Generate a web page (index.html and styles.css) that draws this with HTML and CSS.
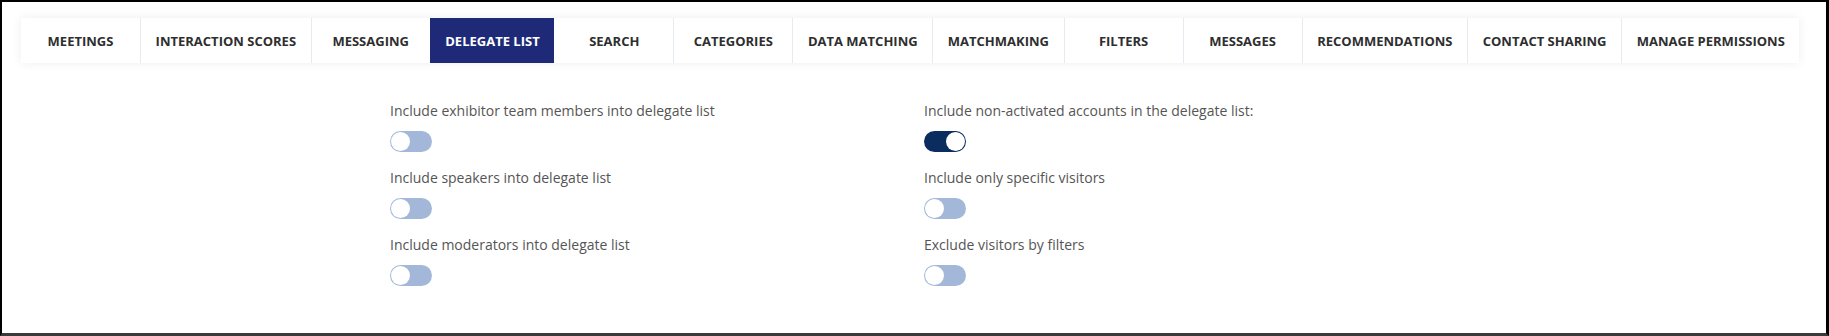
FILE: index.html
```html
<!DOCTYPE html>
<html lang="en">

<head>
    <meta charset="utf-8">
    <link rel="stylesheet" href="styles.css">
</head>

<body>
    <div class="frame">
        <nav class="tabs">
            <a class="tab">Meetings</a>
            <a class="tab">Interaction scores</a>
            <a class="tab">Messaging</a>
            <a class="tab active">Delegate list</a>
            <a class="tab">Search</a>
            <a class="tab">Categories</a>
            <a class="tab">Data matching</a>
            <a class="tab">Matchmaking</a>
            <a class="tab">Filters</a>
            <a class="tab">Messages</a>
            <a class="tab">Recommendations</a>
            <a class="tab">Contact sharing</a>
            <a class="tab">Manage permissions</a>
        </nav>

        <section class="settings">
            <div class="col">
                <div class="setting">
                    <label>Include exhibitor team members into delegate list</label>
                    <span class="toggle"><span class="knob"></span></span>
                </div>
                <div class="setting">
                    <label>Include speakers into delegate list</label>
                    <span class="toggle"><span class="knob"></span></span>
                </div>
                <div class="setting">
                    <label>Include moderators into delegate list</label>
                    <span class="toggle"><span class="knob"></span></span>
                </div>
            </div>
            <div class="col">
                <div class="setting">
                    <label>Include non-activated accounts in the delegate list:</label>
                    <span class="toggle on"><span class="knob"></span></span>
                </div>
                <div class="setting">
                    <label>Include only specific visitors</label>
                    <span class="toggle"><span class="knob"></span></span>
                </div>
                <div class="setting">
                    <label>Exclude visitors by filters</label>
                    <span class="toggle"><span class="knob"></span></span>
                </div>
            </div>
        </section>
    </div>
</body>

</html>
```

FILE: styles.css
```css
* {
    box-sizing: border-box;
}

body {
    margin: 0;
    font-family: "Open Sans", sans-serif;
    background: #fff;
}

.frame {
    height: 336px;
    border-style: solid;
    border-color: #000 #000 #3a3a3a #000;
    border-width: 2px 3px 3px 2px;
    padding-top: 16px;
}

.tabs {
    display: flex;
    width: max-content;
    margin-left: 19px;
    background: #fff;
    box-shadow: 0 0 10px rgba(0, 0, 0, 0.07);
}

.tab {
    display: flex;
    align-items: center;
    justify-content: center;
    height: 45px;
    min-width: 119px;
    padding: 0 14.6px;
    font-size: 13px;
    font-weight: 700;
    text-transform: uppercase;
    color: #2e2e2e;
    border-left: 1px solid #e6eaf1;
    white-space: nowrap;
}

.tab:first-child {
    border-left: none;
}

.tab.active {
    background: #1e2a78;
    color: #fff;
    border-left-color: #1e2a78;
}

.tab.active + .tab {
    border-left-color: #fff;
}

.settings {
    display: grid;
    grid-template-columns: 1fr 1fr;
    width: 1068px;
    margin: 38px auto 0;
}

.col {
    padding: 0 10px;
}

.setting {
    display: flex;
    flex-direction: column;
    align-items: flex-start;
    padding-bottom: 16px;
}

.setting label {
    font-size: 14px;
    line-height: 20px;
    color: #555;
    margin-bottom: 10px;
}

.toggle {
    display: flex;
    width: 42px;
    height: 21px;
    padding: 1px;
    border-radius: 11px;
    background: #a3b8d8;
}

.toggle.on {
    justify-content: flex-end;
    background: #0b2c5e;
}

.knob {
    width: 19px;
    height: 19px;
    border-radius: 50%;
    background: #fff;
}
```
